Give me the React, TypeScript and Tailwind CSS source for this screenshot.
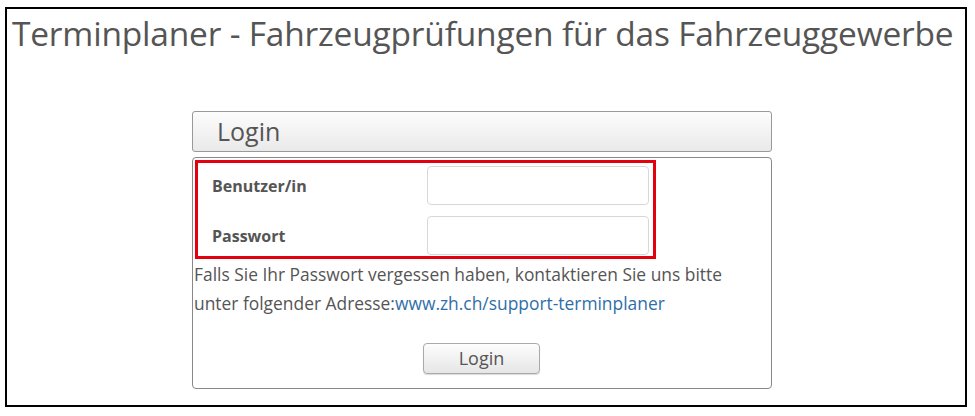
import { FC } from "react";

const font = { fontFamily: '"Open Sans", "Noto Sans", sans-serif' };

type FieldProps = {
  label: string;
  type: string;
};

const Field: FC<FieldProps> = ({ label, type }) => {
  return (
    <div className="flex items-center h-[38px]">
      <label className="w-[229px] pl-[14px] font-bold text-[16px] text-[#555]">{label}</label>
      <input
        type={type}
        className="w-[222px] h-[39px] rounded-[4px] border border-[#d8d8d8] bg-white outline-none"
      />
    </div>
  );
};

const App: FC = () => {
  return (
    <div className="w-[975px] h-[416px] bg-white pt-[7px] pl-[5px]" style={font}>
      <div className="w-[962px] h-[400px] border-2 border-black">
        <h1 className="pl-[5px] pt-[4px] text-[33.5px] leading-[40px] text-[#555] tracking-[-0.2px]">
          Terminplaner - Fahrzeugprüfungen für das Fahrzeuggewerbe
        </h1>
        <div className="ml-[185px] mt-[58px] w-[580px]">
          <div className="h-[41px] rounded-[3px] border border-[#999] bg-gradient-to-b from-[#fdfdfd] to-[#e9e9e9] pl-[24px] flex items-center">
            <span className="text-[25px] text-[#555]">Login</span>
          </div>
          <div className="mt-[5px] h-[232px] rounded-[4px] border border-[#888] bg-white pt-[2px] pl-[2px]">
            <div className="w-[461px] h-[99px] border-[3px] border-[#e3000f] flex flex-col justify-center gap-[12px] pt-[2px]">
              <Field label="Benutzer/in" type="text" />
              <Field label="Passwort" type="password" />
            </div>
            <p className="text-[17.4px] leading-[29px] text-[#555] mt-[1px] -ml-[1px]">
              Falls Sie Ihr Passwort vergessen haben, kontaktieren Sie uns bitte
              <br />
              unter folgender Adresse:
              <a href="#" className="text-[#2f6ea8]">www.zh.ch/support-terminplaner</a>
            </p>
            <div className="flex justify-center mt-[25px] pr-[3px]">
              <button className="w-[117px] h-[31px] rounded-[4px] border border-[#aaa] bg-gradient-to-b from-[#fdfdfd] to-[#e6e6e6] text-[18px] text-[#555] shadow-[0_1px_1px_rgba(0,0,0,0.15)]">
                Login
              </button>
            </div>
          </div>
        </div>
      </div>
    </div>
  );
};

export default App;
